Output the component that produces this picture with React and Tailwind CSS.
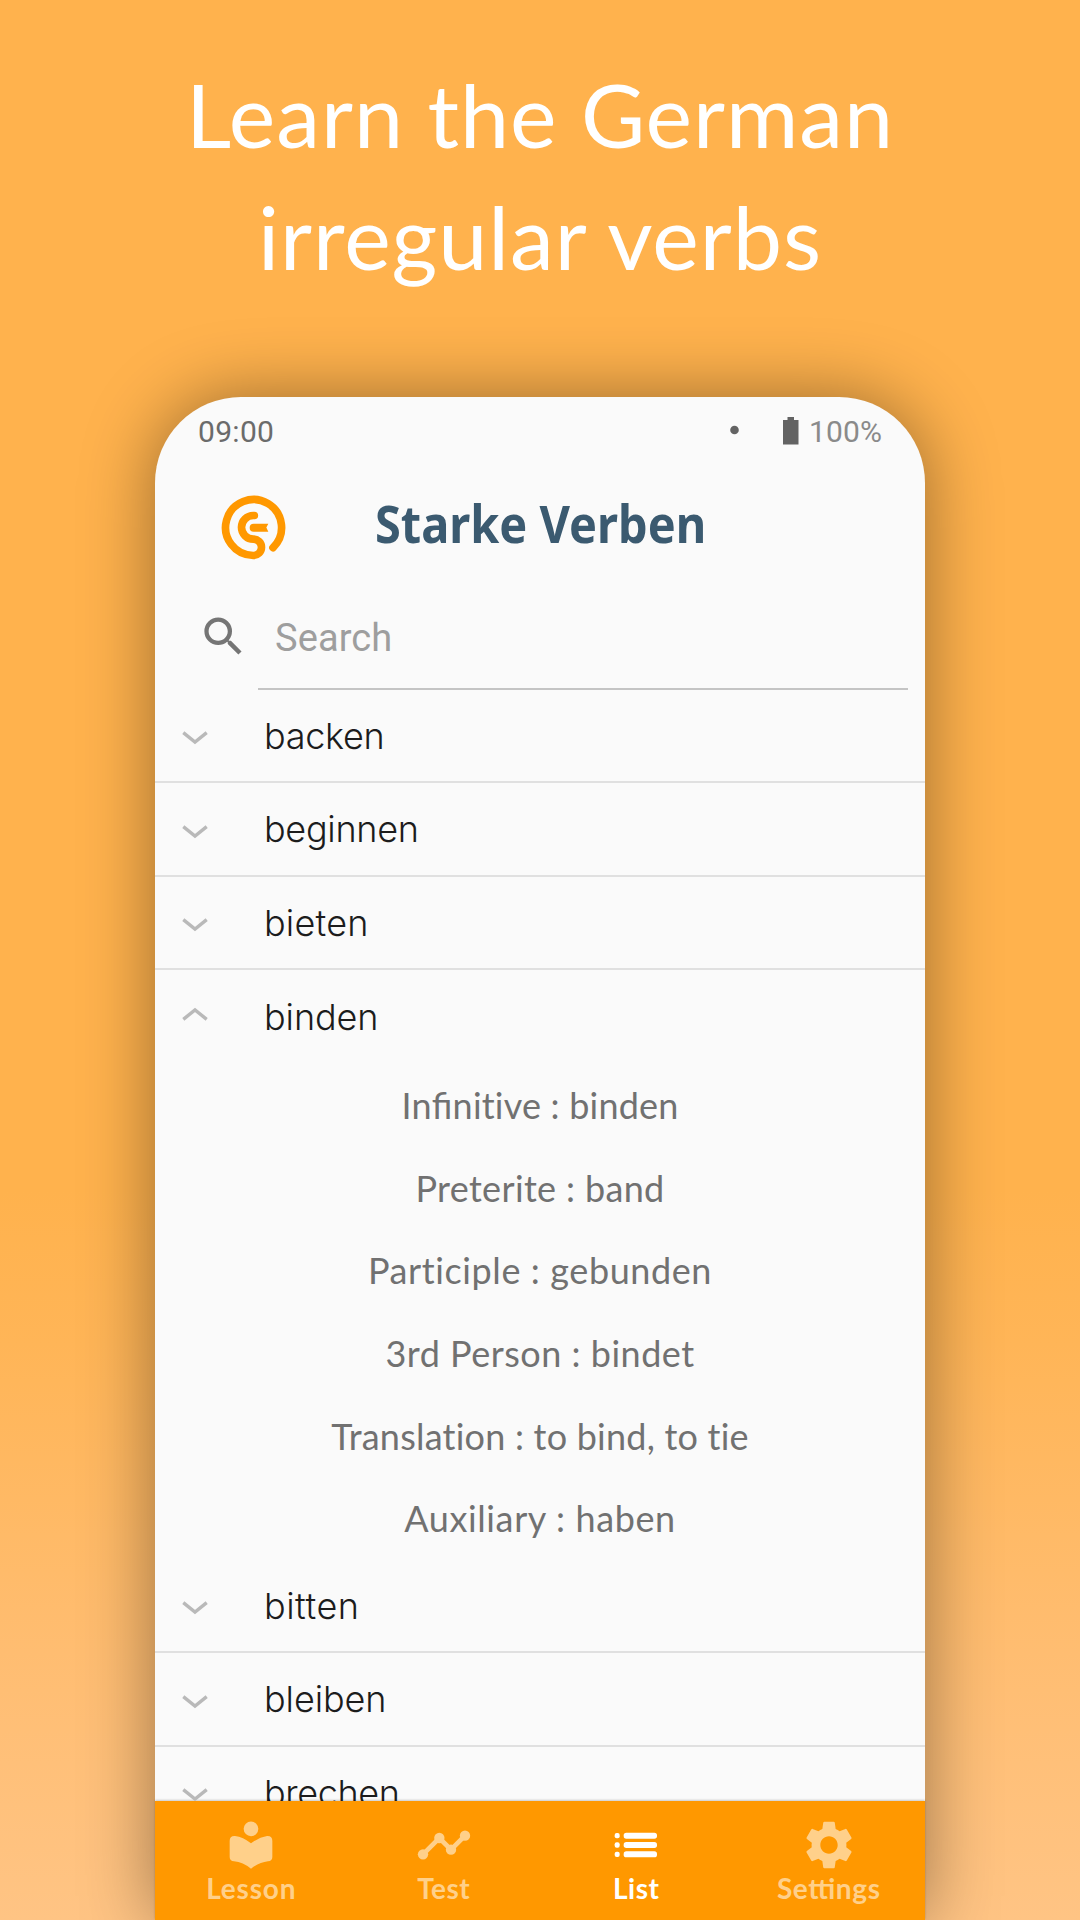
import { MdSearch, MdSettings } from 'react-icons/md';

function Logo() {
  return (
    <svg viewBox="0 0 240 240" className="mt-[23px] ml-[60px] size-20 shrink-0" fill="none">
      <path
        d="M174 173 A84 84 0 1 0 115 196.500 A24.500 24.500 0 0 0 115 147.500 A35.500 35.500 0 0 1 115 76.500 L118 76.500"
        stroke="#ff9800" strokeWidth="23" strokeLinecap="round" strokeLinejoin="round"
      />
      <path d="M116 101 H160 L154 112.500 L160 125 H116 A12 12 0 0 1 116 101Z" fill="#ff9800" />
    </svg>
  );
}

function Chevron({ up }) {
  return (
    <svg viewBox="0 0 30 20" className={up ? 'ml-[25px] h-5 w-[30px] rotate-180 -translate-y-[3px]' : 'ml-[25px] h-5 w-[30px] translate-y-[3px]'} fill="none">
      <path d="M3.300 4.700 L15 14 L26.700 4.700" stroke="#b9b9b9" strokeWidth="3.400" />
    </svg>
  );
}

function Row({ word, open, tracking = 'tracking-[-0.3px]' }) {
  return (
    <div className={`flex h-[93.5px] shrink-0 items-center ${open ? '' : 'border-b-2 border-[#e0e0e0]'}`}>
      <Chevron up={open} />
      <span className={`ml-[54px] font-['Inter',sans-serif] text-[36px] font-[350] leading-[44px] text-[#1c1c1c] ${open ? '' : 'pt-px'} ${tracking}`}>{word}</span>
    </div>
  );
}

const details = [
  [<>In<span className='[font-feature-settings:"liga"]'>fi</span>nitive : binden</>, 'tracking-[0.2px]'],
  ['Preterite : band', 'tracking-[0.35px]'],
  ['Participle : gebunden', 'tracking-[0.6px]'],
  ['3rd Person : bindet', 'tracking-[0.5px]'],
  ['Translation : to bind, to tie', 'tracking-[0.22px]'],
  ['Auxiliary : haben', 'tracking-[0.62px]'],
];

function LessonIcon() {
  return (
    <svg viewBox="247 109 174 174" className="size-[58px]" fill="currentColor">
      <circle cx="334" cy="147.500" r="22" />
      <path d="M334 191 Q310 172 286 169 Q270 168 270 184 V232 Q270 244 283 245 Q310 248 334 267 Q358 248 385 245 Q398 244 398 232 V184 Q398 168 382 169 Q358 172 334 191Z" />
    </svg>
  );
}

function TestIcon() {
  return (
    <svg viewBox="824 109 174 174" className="size-[58px]" fill="currentColor">
      <path d="M848 224 L897 175 L932 210 L974 168" fill="none" stroke="currentColor" strokeWidth="14" />
      <circle cx="848" cy="224" r="15.500" />
      <circle cx="897" cy="175" r="15.500" />
      <circle cx="932" cy="210" r="15.500" />
      <circle cx="974" cy="168" r="15.500" />
    </svg>
  );
}

function ListIcon() {
  return (
    <svg viewBox="203 109 174 174" className="size-[58px]" fill="currentColor">
      {[168, 196, 224].map((y) => (
        <g key={y}>
          <rect x="226" y={y - 8} width="15" height="16" rx="6" />
          <rect x="253" y={y - 9} width="100" height="18" rx="8" />
        </g>
      ))}
    </svg>
  );
}

const tabs = [
  { label: 'Lesson', icon: <LessonIcon />, cls: 'text-[#ffd08a] tracking-[0.8px]' },
  { label: 'Test', icon: <TestIcon />, cls: 'text-[#ffd08a] tracking-[0.5px]' },
  { label: 'List', icon: <ListIcon />, cls: 'text-white tracking-[0.5px]' },
  { label: 'Settings', icon: <MdSettings className="size-[58px]" />, cls: 'text-[#ffd08a] tracking-[0.6px] [font-feature-settings:"liga"]' },
];

export default function App() {
  return (
    <main className="flex h-[1920px] w-[1080px] flex-col items-center overflow-hidden bg-[linear-gradient(180deg,#ffb24d_0%,#ffb24d_62%,#ffb557_70%,#ffbe74_88%,#ffc484_100%)]">
      <h1 className="mt-[54px] h-[343px] shrink-0 text-center font-['Lato',sans-serif] text-[88px] leading-[121.5px] text-white">
        <span className="block tracking-[0.95px]">Learn the German</span>
        <span className="block tracking-[0.95px]">irregular verbs</span>
      </h1>

      <section className="flex h-[1523px] w-[770px] shrink-0 flex-col rounded-t-[86px] bg-[#fafafa] shadow-[0_0_72px_rgba(0,0,0,0.4)]">
        <div className="flex h-[70px] shrink-0 items-center font-['Roboto',sans-serif] text-[30px] leading-[36px]">
          <span className="ml-[43px] w-[531px] text-[#6b6b6b] tracking-[0.3px]">09:00</span>
          <svg viewBox="0 0 80 36" className="-mt-[3px] h-9 w-20 shrink-0" fill="#636363">
            <circle cx="5.500" cy="17" r="4.300" />
            <path d="M54 7 H58.500 V4 H65 V7 H69.500 V31.500 H54Z" />
          </svg>
          <span className="text-[#8a8a8a] tracking-[0.1px]">100%</span>
        </div>

        <header className="flex h-[126px] shrink-0 items-start">
          <Logo />
          <h2 className="mt-[29.5px] ml-[80px] origin-left scale-x-[0.902] whitespace-nowrap font-['Noto_Sans',sans-serif] text-[52px] font-bold leading-[52px] text-[#3b5a70]">
            Starke Verben
          </h2>
        </header>

        <div className="flex h-[96.5px] shrink-0 items-start">
          <MdSearch className="mt-[18px] ml-[43px] size-[51px] shrink-0 text-[#757575]" />
          <div className="ml-[9px] h-[96.5px] w-[650px] border-b-2 border-[#c4c4c4] pt-[23px] pl-[17px] font-['Roboto',sans-serif] text-[38px] leading-[44px] text-[#9e9e9e] tracking-[0.1px]">
            Search
          </div>
        </div>

        <div className="flex min-h-0 flex-1 flex-col overflow-hidden">
          <Row word="backen" />
          <Row word="beginnen" />
          <Row word="bieten" tracking="tracking-[0.2px]" />
          <Row word="binden" open tracking="tracking-[-0.1px]" />
          <div className="shrink-0 text-center font-['Lato',sans-serif] text-[36px] text-[#717171]">
            {details.map(([text, cls], i) => (
              <p key={i} className={`h-[82.7px] pt-[0.5px] leading-[82.7px] ${cls}`}>{text}</p>
            ))}
          </div>
          <Row word="bitten" tracking="tracking-[0.5px]" />
          <Row word="bleiben" tracking="tracking-[-0.1px]" />
          <Row word="brechen" tracking="tracking-[-0.4px]" />
        </div>

        <nav className="grid h-[119px] shrink-0 grid-cols-4 bg-[#ff9800] pt-[15px] shadow-[0_-1px_2px_rgba(0,0,0,0.2)]">
          {tabs.map((t) => (
            <div key={t.label} className={`flex flex-col items-center font-['Lato',sans-serif] text-[28px] font-bold leading-[28px] ${t.cls}`}>
              {t.icon}
              <span>{t.label}</span>
            </div>
          ))}
        </nav>
      </section>
    </main>
  );
}
